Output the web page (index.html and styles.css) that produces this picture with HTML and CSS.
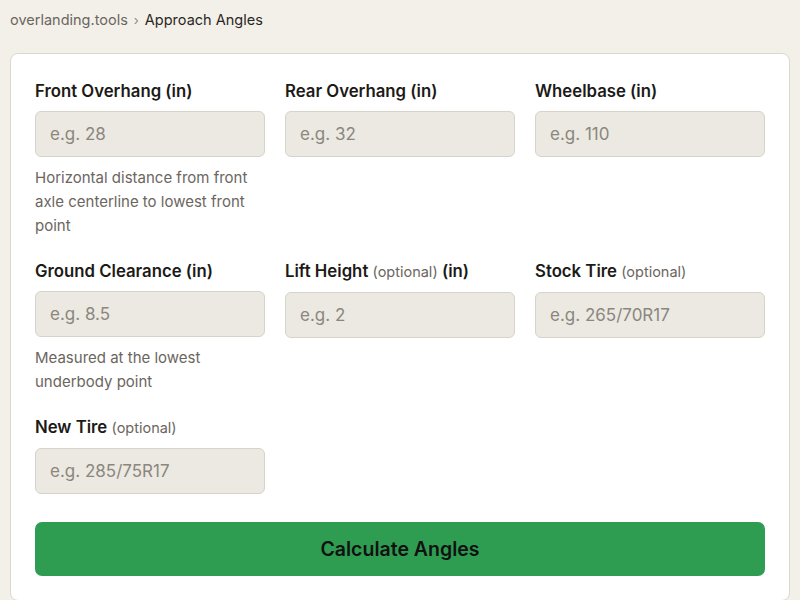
FILE: index.html
```html
<!DOCTYPE html>
<html>
<head>
    <title>Approach Angles - overlanding.tools</title>
    <link rel="stylesheet" href="styles.css">
</head>
<body>
    <nav class="crumbs">
        <a href="#">overlanding.tools</a>
        <span class="sep">›</span>
        <span class="current">Approach Angles</span>
    </nav>
    <div class="card">
        <form class="form-grid">
            <div class="field">
                <label for="frontOverhang">Front Overhang (in)</label>
                <input type="text" id="frontOverhang" placeholder="e.g. 28">
                <p class="help">Horizontal distance from front axle centerline to lowest front point</p>
            </div>
            <div class="field">
                <label for="rearOverhang">Rear Overhang (in)</label>
                <input type="text" id="rearOverhang" placeholder="e.g. 32">
            </div>
            <div class="field">
                <label for="wheelbase">Wheelbase (in)</label>
                <input type="text" id="wheelbase" placeholder="e.g. 110">
            </div>
            <div class="field">
                <label for="clearance">Ground Clearance (in)</label>
                <input type="text" id="clearance" placeholder="e.g. 8.5">
                <p class="help">Measured at the lowest underbody point</p>
            </div>
            <div class="field">
                <label for="lift">Lift Height <span class="opt">(optional)</span> (in)</label>
                <input type="text" id="lift" placeholder="e.g. 2">
            </div>
            <div class="field">
                <label for="stockTire">Stock Tire <span class="opt">(optional)</span></label>
                <input type="text" id="stockTire" placeholder="e.g. 265/70R17">
            </div>
            <div class="field">
                <label for="newTire">New Tire <span class="opt">(optional)</span></label>
                <input type="text" id="newTire" placeholder="e.g. 285/75R17">
            </div>
        </form>
        <button id="calcButton">Calculate Angles</button>
    </div>
</body>
</html>
```

FILE: styles.css
```css
body {
    font-family: Inter, "Noto Sans", sans-serif;
    margin: 0;
    padding: 8px 10px 0;
    background-color: #f3f0ea;
    color: #1c1a17;
}
.crumbs {
    font-size: 14.5px;
    line-height: 24px;
    display: flex;
    align-items: center;
    gap: 6px;
}
.crumbs a {
    color: #6b665e;
    text-decoration: none;
}
.crumbs .sep {
    color: #8f8a82;
    font-size: 13px;
}
.crumbs .current {
    color: #2a2723;
}
.card {
    margin-top: 21px;
    background-color: white;
    border: 1px solid #ddd8cd;
    border-radius: 8px;
    padding: 25px 24px 24px;
}
.form-grid {
    display: grid;
    grid-template-columns: repeat(3, minmax(0, 1fr));
    column-gap: 20px;
    row-gap: 21px;
    margin: 0;
}
.field {
    display: flex;
    flex-direction: column;
    min-width: 0;
}
.field label {
    font-size: 16.75px;
    font-weight: 600;
    line-height: 24px;
    margin-bottom: 8px;
    color: #1c1a17;
    white-space: nowrap;
}
.field .opt {
    font-size: 14.5px;
    font-weight: 400;
    color: #6b665e;
}
.field input {
    width: 100%;
    height: 46px;
    box-sizing: border-box;
    background-color: #ece9e2;
    border: 1px solid #d7d3ca;
    border-radius: 6px;
    padding: 0 14px;
    font-family: inherit;
    font-size: 17px;
    color: #1c1a17;
}
.field input::placeholder {
    color: #8b867e;
}
.help {
    margin: 9px 0 0;
    font-size: 15px;
    line-height: 24px;
    color: #6b665e;
}
#calcButton {
    display: block;
    width: 100%;
    margin-top: 28px;
    height: 54px;
    background-color: #2e9d52;
    color: #111;
    border: none;
    border-radius: 7px;
    font-family: inherit;
    font-size: 19.5px;
    font-weight: 600;
    cursor: pointer;
}
```
